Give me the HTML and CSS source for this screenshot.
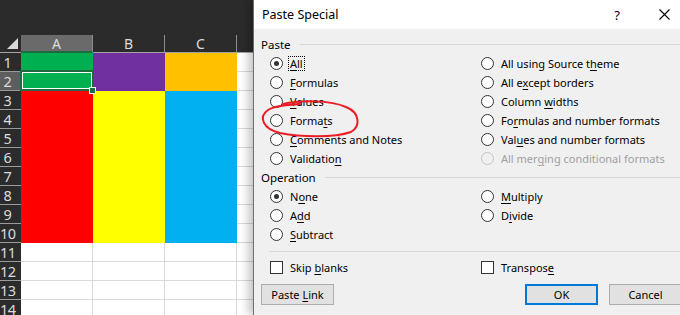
FILE: index.html
```html
<!DOCTYPE html>
<html>
    <head>
        <meta charset="utf-8">
        <title>Paste Special</title>
        <link rel="stylesheet" href="styles.css">
    </head>
    <body>
        <div class="screen">
            <!-- 왼쪽 시트 -->
            <div class="sheet">
                <div class="ribbon"></div>
                <div class="corner"><span class="tri"></span></div>
                <div class="colhead on">A</div>
                <div class="colhead">B</div>
                <div class="colhead">C</div>
                <div class="colhead last"></div>

                <div class="rh">1</div><div class="c g"></div><div class="c p"></div><div class="c o"></div><div class="c d"></div>
                <div class="rh on">2</div><div class="c g sel"><span class="handle"></span></div><div class="c p"></div><div class="c o"></div><div class="c d"></div>
                <div class="rh">3</div><div class="c r"></div><div class="c y"></div><div class="c b"></div><div class="c d"></div>
                <div class="rh">4</div><div class="c r"></div><div class="c y"></div><div class="c b"></div><div class="c d"></div>
                <div class="rh">5</div><div class="c r"></div><div class="c y"></div><div class="c b"></div><div class="c d"></div>
                <div class="rh">6</div><div class="c r"></div><div class="c y"></div><div class="c b"></div><div class="c d"></div>
                <div class="rh">7</div><div class="c r"></div><div class="c y"></div><div class="c b"></div><div class="c d"></div>
                <div class="rh">8</div><div class="c r"></div><div class="c y"></div><div class="c b"></div><div class="c d"></div>
                <div class="rh">9</div><div class="c r"></div><div class="c y"></div><div class="c b"></div><div class="c d"></div>
                <div class="rh">10</div><div class="c r"></div><div class="c y"></div><div class="c b"></div><div class="c d"></div>
                <div class="rh">11</div><div class="c"></div><div class="c"></div><div class="c"></div><div class="c d"></div>
                <div class="rh">12</div><div class="c"></div><div class="c"></div><div class="c"></div><div class="c d"></div>
                <div class="rh">13</div><div class="c"></div><div class="c"></div><div class="c"></div><div class="c d"></div>
                <div class="rh">14</div><div class="c"></div><div class="c"></div><div class="c"></div><div class="c d"></div>
            </div>

            <!-- 붙여넣기 대화상자 -->
            <div class="dialog">
                <div class="titlebar">
                    <span class="title">Paste Special</span>
                    <span class="help">?</span>
                    <svg class="close" width="11" height="11" viewBox="0 0 11 11">
                        <path d="M0.5 0.5 L10.5 10.5 M10.5 0.5 L0.5 10.5" stroke="#000" stroke-width="1.1" fill="none"/>
                    </svg>
                </div>
                <div class="body">
                    <div class="legend">Paste</div>
                    <div class="options">
                        <div class="opt"><span class="radio checked"></span><span class="focus"><u>A</u>ll</span></div>
                        <div class="opt"><span class="radio"></span><span>All using Source t<u>h</u>eme</span></div>
                        <div class="opt"><span class="radio"></span><span><u>F</u>ormulas</span></div>
                        <div class="opt"><span class="radio"></span><span>All e<u>x</u>cept borders</span></div>
                        <div class="opt"><span class="radio"></span><span><u>V</u>alues</span></div>
                        <div class="opt"><span class="radio"></span><span>Column <u>w</u>idths</span></div>
                        <div class="opt"><span class="radio"></span><span>Forma<u>t</u>s</span></div>
                        <div class="opt"><span class="radio"></span><span>Fo<u>r</u>mulas and number formats</span></div>
                        <div class="opt"><span class="radio"></span><span><u>C</u>omments and Notes</span></div>
                        <div class="opt"><span class="radio"></span><span>Val<u>u</u>es and number formats</span></div>
                        <div class="opt"><span class="radio"></span><span>Validatio<u>n</u></span></div>
                        <div class="opt off"><span class="radio"></span><span>All mer<u>g</u>ing conditional formats</span></div>
                    </div>

                    <div class="legend op">Operation</div>
                    <div class="options">
                        <div class="opt"><span class="radio checked"></span><span>N<u>o</u>ne</span></div>
                        <div class="opt"><span class="radio"></span><span><u>M</u>ultiply</span></div>
                        <div class="opt"><span class="radio"></span><span>A<u>d</u>d</span></div>
                        <div class="opt"><span class="radio"></span><span>D<u>i</u>vide</span></div>
                        <div class="opt"><span class="radio"></span><span><u>S</u>ubtract</span></div>
                    </div>

                    <div class="sep"></div>
                    <div class="options checks">
                        <div class="opt"><span class="box"></span><span>Skip <u>b</u>lanks</span></div>
                        <div class="opt"><span class="box"></span><span>Transpos<u>e</u></span></div>
                    </div>

                    <div class="buttons">
                        <button class="btn">Paste <u>L</u>ink</button>
                        <span class="spacer"></span>
                        <button class="btn ok">OK</button>
                        <button class="btn">Cancel</button>
                    </div>
                </div>
            </div>
        </div>

        <!-- 빨간 동그라미 표시 -->
        <svg class="markup" width="680" height="315" viewBox="0 0 680 315">
            <path d="M283 104 C300 100 330 100 346 107 C361 113 360 127 351 132 C334 138 300 137 280 133 C263 129 258 117 268 110 C274 106 284 105 300 104"
                  stroke="#ec1c24" stroke-width="2" fill="none" stroke-linecap="round"/>
        </svg>
    </body>
</html>
```
FILE: styles.css
```css
html, body {
    margin: 0;
    padding: 0;
}
body {
    width: 680px;
    height: 315px;
    overflow: hidden;
    position: relative;
    font-family: "Segoe UI", "Noto Sans", sans-serif;
}
.screen {
    display: flex;
    height: 315px;
}

/* 시트 */
.sheet {
    width: 253px;
    flex: none;
    display: grid;
    grid-template-columns: 21px 72px 72px 72px 1fr;
    grid-template-rows: 35px 18px repeat(14, 19px);
    background: #fff;
    overflow: hidden;
}
.ribbon {
    grid-column: 1 / -1;
    background: #2b2b2b;
}
.corner {
    background: #2b2b2b;
    border-bottom: 1px solid #a3a3a3;
    position: relative;
}
.tri {
    position: absolute;
    right: 3px;
    bottom: 3px;
    width: 0;
    height: 0;
    border-left: 11px solid transparent;
    border-bottom: 11px solid #d9d9d9;
}
.colhead {
    background: #2b2b2b;
    color: #dcdcdc;
    font-size: 14px;
    text-align: center;
    line-height: 17px;
    border-right: 1px solid #8c8c8c;
    border-bottom: 1px solid #a3a3a3;
    box-sizing: border-box;
}
.colhead.on {
    background: #6a6a6a;
    border-bottom: 2px solid #1e6b41;
}
.colhead.last {
    border-right: none;
}
.rh {
    background: #2b2b2b;
    color: #dcdcdc;
    font-size: 14.5px;
    line-height: 19px;
    text-align: center;
    padding-right: 6px;
    border-bottom: 1px solid #9a9a9a;
    box-sizing: border-box;
    overflow: hidden;
    letter-spacing: -0.5px;
}
.rh.on {
    background: #5e5e5e;
}
.c {
    border-right: 1px solid #d9d9d9;
    border-bottom: 1px solid #d9d9d9;
    box-sizing: border-box;
}
.c.d {
    border-right: none;
}
.g { background: #00b050; border-color: transparent; }
.p { background: #7030a0; border-color: transparent; }
.o { background: #ffc000; border-color: transparent; }
.r { background: #ff0000; border-color: transparent; }
.y { background: #ffff00; border-color: transparent; }
.b { background: #00b0f0; border-color: transparent; }

/* 선택된 셀 */
.sel {
    position: relative;
}
.sel::after {
    content: "";
    position: absolute;
    left: -1px;
    top: -2px;
    right: -2px;
    bottom: -1px;
    border: 2px solid #1e6b41;
    box-shadow: inset 0 0 0 1px #fff;
}
.handle {
    position: absolute;
    right: -4px;
    bottom: -4px;
    width: 5px;
    height: 5px;
    background: #1e6b41;
    border: 1px solid #fff;
    z-index: 2;
}

/* 대화상자 */
.dialog {
    flex: 1;
    position: relative;
    background: #f0f0f0;
    border-left: 1px solid #6e6e6e;
    box-shadow: -5px 0 8px rgba(0, 0, 0, 0.22);
    font-size: 11px;
    color: #000;
}
.titlebar {
    height: 29px;
    background: #fff;
    display: flex;
    align-items: center;
    padding-left: 8px;
}
.title {
    font-size: 12.5px;
    flex: 1;
    padding-bottom: 1px;
}
.help {
    font-size: 13px;
    margin-right: 39px;
}
.close {
    margin-right: 10px;
}
.body {
    padding: 7px 0 0 7px;
}
.legend {
    display: flex;
    align-items: center;
    gap: 9px;
    height: 16px;
    font-size: 11.5px;
}
.legend::after {
    content: "";
    flex: 1;
    height: 1px;
    background: #d8d8d8;
}
.legend.op {
    margin-top: 1px;
}
.options {
    display: grid;
    grid-template-columns: 211px 1fr;
    grid-auto-rows: 19px;
    margin-top: 2px;
    padding-left: 9px;
}
.opt {
    display: flex;
    align-items: center;
    white-space: nowrap;
}
.opt.off {
    color: #a0a0a0;
}
.radio {
    width: 13px;
    height: 13px;
    box-sizing: border-box;
    border: 1px solid #333;
    border-radius: 50%;
    background: #fff;
    margin-right: 7px;
    position: relative;
    flex: none;
}
.radio.checked::after {
    content: "";
    position: absolute;
    left: 3px;
    top: 3px;
    width: 5px;
    height: 5px;
    border-radius: 50%;
    background: #333;
}
.off .radio {
    border-color: #c4c4c4;
    background: #f0f0f0;
}
.focus {
    outline: 1px dotted #000;
    outline-offset: 0;
    padding: 0 1px;
    margin-left: -1px;
    line-height: 13px;
}
.box {
    width: 13px;
    height: 13px;
    box-sizing: border-box;
    border: 1px solid #333;
    background: #fff;
    margin-right: 7px;
    flex: none;
}
.sep {
    height: 1px;
    background: #d8d8d8;
    margin: 7px 0 0 8px;
}
.checks {
    margin-top: 6px;
}
.buttons {
    display: flex;
    margin-top: 7px;
    gap: 11px;
}
.spacer {
    flex: 1;
}
.btn {
    width: 73px;
    height: 21px;
    flex: none;
    padding: 0;
    font-family: inherit;
    font-size: 11px;
    color: #000;
    background: #e1e1e1;
    border: 1px solid #adadad;
    box-sizing: border-box;
}
.btn.ok {
    border: 2px solid #0078d7;
}
.buttons .btn:last-child {
    margin-right: -2px;
}
u {
    text-decoration-thickness: 1px;
    text-underline-offset: 2px;
}

/* 빨간 표시 */
.markup {
    position: absolute;
    left: 0;
    top: 0;
    pointer-events: none;
}
```
